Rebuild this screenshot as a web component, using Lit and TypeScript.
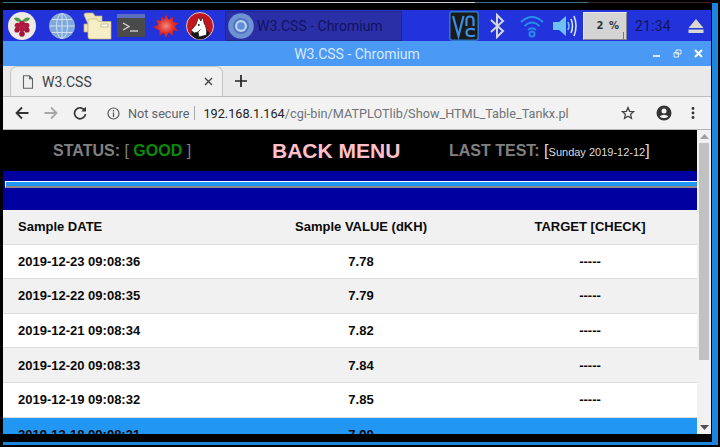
import { LitElement, css, html, svg } from "lit";
import { customElement } from "lit/decorators.js";

const rows = [
  ["2019-12-23 09:08:36", "7.78", "-----"],
  ["2019-12-22 09:08:35", "7.79", "-----"],
  ["2019-12-21 09:08:34", "7.82", "-----"],
  ["2019-12-20 09:08:33", "7.84", "-----"],
  ["2019-12-19 09:08:32", "7.85", "-----"],
  ["2019-12-18 09:08:31", "7.90", "-----"],
];

const icon = (w: number, h: number, body: unknown) => html`<svg
  width="${w}"
  height="${h}"
  viewBox="0 0 ${w} ${h}"
>${body}</svg>`;

const raspberry = svg`
  <circle cx="14" cy="14" r="14" fill="#eee9e4"/>
  <path d="M14 9 C11 5 8 5 6 6 C7 9 10 10 14 10 C18 10 21 9 22 6 C20 5 17 5 14 9Z" fill="#4b9a46"/>
  <circle cx="14" cy="12" r="3" fill="#b0183f"/><circle cx="9.5" cy="13.500" r="2.800" fill="#b0183f"/>
  <circle cx="18.500" cy="13.500" r="2.800" fill="#b0183f"/><circle cx="14" cy="17" r="3" fill="#b0183f"/>
  <circle cx="9" cy="18" r="2.600" fill="#a0163a"/><circle cx="19" cy="18" r="2.600" fill="#a0163a"/>
  <circle cx="14" cy="22" r="2.800" fill="#a0163a"/>`;

const globe = svg`
  <circle cx="13" cy="13" r="12.500" fill="#7fa9dc" stroke="#9fb4cc"/>
  <g fill="none" stroke="#cfe0f2" stroke-width="1">
    <ellipse cx="13" cy="13" rx="5.500" ry="12.500"/>
    <path d="M13 1V25M1 13H25M3 6.500H23M3 19.500H23"/>
  </g>`;

const folder = svg`
  <path d="M1 3 Q1 1 3 1H10L12 4H19V12H1V20H5V12Z" fill="#efe6b8" stroke="#b9ad7c" stroke-width=".7"/>
  <path d="M5 9 Q5 7 7 7H14L16 9.500H28V27H7 Q5 27 5 25Z" fill="#f6eec4" stroke="#c2b684" stroke-width=".7"/>
  <rect x="18" y="12" width="7" height="3" fill="#fff" stroke="#a59a6c" stroke-width=".6"/>`;

const terminal = svg`
  <rect width="28" height="23" y="1" fill="#4a4a4a"/>
  <rect width="28" height="4" y="1" fill="#5b6fc0"/>
  <path d="M6 10 L12 13.500 L6 17" fill="none" stroke="#d8d8d8" stroke-width="1.300"/>
  <path d="M13 18H21" stroke="#d8d8d8" stroke-width="1.300"/>`;

const burst = svg`
  <defs><radialGradient id="burst"><stop offset="0" stop-color="#f08a80"/><stop offset=".55" stop-color="#e2342c"/><stop offset="1" stop-color="#c81818"/></radialGradient></defs>
  <path d="M13 0 L15.500 6 L20 2.500 L20 8 L26 9 L21.500 12.500 L25.500 17 L20 16.500 L19.500 22 L15.500 18.500 L13 24 L10.500 18.500 L6.500 22 L6.500 16.500 L0 13 L5.500 11 L3 5.500 L8 7 L9 2 L11 6 Z" fill="url(#burst)"/>`;

const wolfram = svg`
  <circle cx="14" cy="14" r="13.500" fill="#c3161f" stroke="#cfcfcf"/>
  <path d="M5 22 Q9 27.500 14 27.500 Q20 27.500 24 21 L20 18 L8 18Z" fill="#161616"/>
  <path d="M12.500 5 L14.800 9 L17 5 L18 11 C20 14 21 18 20.500 23 L13 25 L12 20 L8.500 21 L5 18.500 L10 12.500Z" fill="#fff" stroke="#161616" stroke-width=".7"/>
  <path d="M12 20 L14.500 17.500" stroke="#161616" stroke-width=".8"/>
  <circle cx="12.800" cy="13" r=".9" fill="#161616"/>`;

const chromium = svg`
  <circle cx="13" cy="13" r="12.800" fill="#6f93d2"/>
  <circle cx="13" cy="13" r="8" fill="#4f74c4"/>
  <circle cx="13" cy="13" r="6" fill="#bcd2ee"/>
  <circle cx="13" cy="13" r="3.800" fill="#5f8fd8"/>`;

const vnc = svg`
  <rect x=".8" y=".8" width="28.400" height="28.400" rx="2.500" fill="#1a1a1a" stroke="#2f78c8" stroke-width="1.500"/>
  <g fill="none" stroke="#3a8ee4" stroke-width="2.200">
    <path d="M4 5 L9.500 25 L14.500 5"/>
    <path d="M17.500 15 V9 Q17.500 5.500 21 5.500 Q24.500 5.500 24.500 9 V15"/>
    <path d="M26 18.500 Q17.500 16.500 17.500 21.500 Q17.500 26.500 26 24.500"/>
  </g>`;

const bluetooth = svg`<path d="M2 7 L14 18 L8 24 V2 L14 8 L2 19" fill="none" stroke="#d6d6d6" stroke-width="2"/>`;

const wifi = svg`
  <g fill="none" stroke="#2a8be8" stroke-width="2">
    <path d="M1 8 Q12 -2 23 8"/><path d="M4.500 12 Q12 5 19.500 12"/><path d="M8 16 Q12 12.500 16 16"/>
  </g>
  <circle cx="12" cy="20" r="2.500" fill="none" stroke="#2a8be8" stroke-width="2"/>`;

const volume = svg`
  <path d="M0 8H6L13 2V22L6 16H0Z" fill="#6ec0f5"/>
  <g fill="none" stroke-width="1.600">
    <path d="M15 8 Q17 12 15 16" stroke="#6ec0f5"/>
    <path d="M18 5 Q21 12 18 19" stroke="#cfe4f5"/>
    <path d="M21 2 Q25 12 21 22" stroke="#cfe4f5"/>
  </g>`;

const eject = svg`
  <path d="M8 1 L15.500 10 H.5Z" fill="#d8d8cc"/>
  <rect x=".5" y="11.500" width="15" height="3.500" fill="#d8d8cc"/>`;

@customElement("app-root")
export class AppRoot extends LitElement {
  static styles = css`
    :host {
      display: flex;
      width: 720px;
      height: 447px;
      overflow: hidden;
      background: #000;
      font-family: Roboto, "Liberation Sans", sans-serif;
    }
    .main {
      width: 712px;
      height: 445px;
      flex: none;
      display: flex;
      flex-direction: column;
      box-sizing: border-box;
      padding: 2px 1px 0 3px;
    }
    .strip {
      width: 6px;
      height: 442px;
      margin-top: 3px;
      flex: none;
      background: #1d86dc;
    }
    .edge {
      height: 1px;
      flex: none;
      margin-bottom: 7px;
      background: linear-gradient(
        90deg,
        #3f6f86 0 237px,
        #c8d2d6 237px 472px,
        #3f6f86 472px 585px,
        #3a2020 585px
      );
    }
    .foot {
      height: 3px;
      flex: none;
      margin-top: 8px;
      margin-right: -1px;
      background: #1d86dc;
    }
    .panel {
      height: 31px;
      flex: none;
      background: #2233dc;
      display: flex;
      align-items: center;
    }
    .panel svg {
      flex: none;
      display: block;
    }
    .rasp { margin-left: 5px; }
    .globe { margin-left: 13px; }
    .folder { margin-left: 8px; }
    .term { margin-left: 5px; }
    .burst { margin-left: 8px; }
    .wolf { margin-left: 7px; }
    .vnc { margin-left: 47px; }
    .bt { margin-left: 10px; }
    .wifi { margin-left: 15px; }
    .vol { margin-left: 9px; }
    .eject { margin-left: 19px; }
    .task {
      width: 177px;
      height: 30px;
      flex: none;
      margin-left: 11px;
      background: #2a2fa8;
      border: 1px solid #22278c;
      box-sizing: border-box;
      display: flex;
      align-items: center;
      padding-left: 2px;
      color: #12135e;
      font-size: 14px;
      white-space: nowrap;
    }
    .task span {
      margin-left: 3px;
    }
    .meter {
      width: 44px;
      height: 28px;
      background: #d4d4d4;
      border: 1px solid;
      border-color: #e8e8e8 #888 #888 #e8e8e8;
      box-sizing: border-box;
      display: flex;
      align-items: center;
      justify-content: flex-end;
      padding-right: 7px;
      margin-left: 4px;
      font: bold 10px "DejaVu Sans", sans-serif;
      word-spacing: 2px;
      color: #333;
      flex: none;
      position: relative;
    }
    .meter::after {
      content: "";
      position: absolute;
      right: 2px;
      bottom: 0;
      width: 1px;
      height: 7px;
      background: #777;
    }
    .clock {
      margin-left: 8px;
      width: 34px;
      flex: none;
      color: #12135e;
      font-size: 14px;
      letter-spacing: 0.2px;
    }
    .title {
      height: 25px;
      flex: none;
      background: #4a9af5;
      display: flex;
      align-items: center;
      justify-content: center;
      color: #d8e8fb;
      font-size: 14px;
      position: relative;
    }
    .winbtns {
      position: absolute;
      right: 8px;
      top: 8px;
      display: flex;
      gap: 12px;
      align-items: center;
    }
    .tabs {
      height: 31px;
      flex: none;
      background: #e9e9e9;
      border-bottom: 1px solid #bcbcbc;
      box-sizing: border-box;
      display: flex;
      align-items: flex-end;
      padding-left: 7px;
    }
    .tab {
      width: 213px;
      height: 30px;
      box-sizing: border-box;
      background: #f0f0f0;
      border: 1px solid #c4c4c4;
      border-bottom: none;
      border-radius: 7px 7px 0 0;
      display: flex;
      align-items: center;
      padding: 0 9px 0 11px;
      color: #3c4043;
      font-size: 14px;
    }
    .tab span {
      margin-left: 8px;
      flex: 1;
    }
    .plus {
      margin-left: 12px;
      align-self: center;
      display: flex;
    }
    .toolbar {
      height: 33px;
      flex: none;
      background: #f2f2f2;
      border-bottom: 1px solid #b5b5b5;
      box-sizing: border-box;
      display: flex;
      align-items: center;
      padding-left: 12px;
      font-size: 12.7px;
      color: #5f6368;
    }
    .nav {
      display: flex;
      gap: 15px;
      align-items: center;
      flex: none;
    }
    .omni {
      flex: 1;
      display: flex;
      align-items: center;
      margin-left: 20px;
      white-space: nowrap;
    }
    .secure {
      margin-left: 8px;
    }
    .sep {
      width: 1px;
      height: 14px;
      background: #aaa;
      margin: 0 8px 0 5px;
    }
    .host {
      color: #222;
    }
    .url {
      color: #6f7378;
    }
    .tools {
      display: flex;
      align-items: center;
      gap: 19px;
      padding-right: 16px;
      flex: none;
    }
    .tools svg:first-child {
      margin-right: 2px;
    }
    .view {
      flex: 1;
      min-height: 0;
      display: flex;
      overflow: hidden;
    }
    .page {
      flex: 1;
      min-width: 0;
      display: flex;
      flex-direction: column;
      font-family: "Liberation Sans", Arial, sans-serif;
      background: #fff;
    }
    .head {
      height: 41px;
      flex: none;
      background: #000;
      display: grid;
      grid-template-columns: 219px 177px 1fr;
      align-items: center;
      color: #808080;
      font-size: 16px;
      font-weight: bold;
      padding-left: 50px;
      white-space: nowrap;
    }
    .good {
      color: #0a8a0a;
    }
    .thin {
      font-weight: normal;
    }
    .back {
      color: #ffc0cb;
      font-size: 21px;
      font-weight: bold;
    }
    .last small {
      color: #ddd;
      font-size: 11px;
      font-weight: normal;
    }
    .last i {
      color: #ddd;
      font-style: normal;
      font-weight: normal;
    }
    .band {
      height: 39px;
      flex: none;
      background: #0000a0;
      box-sizing: border-box;
      padding-top: 10px;
    }
    .bar {
      height: 7px;
      box-sizing: border-box;
      background: #2196f3;
      border-top: 1px solid #fff;
      border-left: 1px solid #fff;
      border-bottom: 2px solid #8a8a8a;
      margin-left: 2px;
    }
    .row {
      display: grid;
      grid-template-columns: 206px 274px 1fr;
      height: 34.600px;
      flex: none;
      box-sizing: border-box;
      border-bottom: 1px solid #ddd;
      align-items: center;
      padding: 0 15px;
      font-size: 13px;
      font-weight: bold;
      color: #0a0a0a;
      background: #fff;
    }
    .row.alt {
      background: #f1f1f1;
    }
    .row.sel {
      background: #2196f3;
      border-bottom: none;
    }
    .row div:nth-child(2),
    .row div:nth-child(3) {
      text-align: center;
    }
    .scroll {
      width: 14px;
      flex: none;
      background: #f1f1f1;
      display: flex;
      flex-direction: column;
      align-items: stretch;
    }
    .arrow {
      height: 13px;
      flex: none;
      display: flex;
      align-items: center;
      justify-content: center;
    }
    .track {
      flex: 1;
      min-height: 0;
      padding: 0 2px;
    }
    .thumb {
      height: 217px;
      background: #c1c1c1;
    }
  `;

  render() {
    return html`
      <div class="main">
        <div class="edge"></div>
        <div class="panel">
          <span class="rasp">${icon(28, 28, raspberry)}</span>
          <span class="globe">${icon(26, 26, globe)}</span>
          <span class="folder">${icon(29, 28, folder)}</span>
          <span class="term">${icon(28, 25, terminal)}</span>
          <span class="burst">${icon(26, 24, burst)}</span>
          <span class="wolf">${icon(28, 28, wolfram)}</span>
          <div class="task">
            ${icon(26, 26, chromium)}<span>W3.CSS - Chromium</span>
          </div>
          <span class="vnc">${icon(30, 30, vnc)}</span>
          <span class="bt">${icon(16, 26, bluetooth)}</span>
          <span class="wifi">${icon(24, 24, wifi)}</span>
          <span class="vol">${icon(26, 24, volume)}</span>
          <div class="meter">2 %</div>
          <div class="clock">21:34</div>
          <span class="eject">${icon(16, 16, eject)}</span>
        </div>
        <div class="title">
          W3.CSS - Chromium
          <div class="winbtns">
            ${icon(9, 9, svg`<rect y="6" x="1" width="7" height="2" fill="#dfeafb"/>`)}
            ${icon(9, 9, svg`<path d="M3 1H8V5H3ZM1 3.500H5.500V8H1Z" fill="none" stroke="#dfeafb"/>`)}
            ${icon(9, 9, svg`<path d="M1 1L8 8M8 1L1 8" stroke="#fff" stroke-width="2"/>`)}
          </div>
        </div>
        <div class="tabs">
          <div class="tab">
            ${icon(12, 14, svg`<path d="M1.500 .800H7.500L10.500 3.800V13.200H1.500ZM7.500 .800V3.800H10.500" fill="none" stroke="#5f6368" stroke-width="1.100"/>`)}
            <span>W3.CSS</span>
            ${icon(9, 9, svg`<path d="M1 1L8 8M8 1L1 8" stroke="#444" stroke-width="1.400"/>`)}
          </div>
          <div class="plus">
            ${icon(12, 12, svg`<path d="M6 0V12M0 6H12" stroke="#222" stroke-width="1.700"/>`)}
          </div>
        </div>
        <div class="toolbar">
          <div class="nav">
            ${icon(14, 14, svg`<path d="M13.500 7H2M7 1.500L1.500 7L7 12.500" fill="none" stroke="#333" stroke-width="1.800"/>`)}
            ${icon(14, 14, svg`<path d="M.5 7H12M7 1.500L12.500 7L7 12.500" fill="none" stroke="#a8a8a8" stroke-width="1.800"/>`)}
            ${icon(14, 14, svg`<path d="M11.800 4.500A5.500 5.500 0 1 0 12.500 8" fill="none" stroke="#333" stroke-width="1.700"/><path d="M13 .8V5.500H8.300Z" fill="#333"/>`)}
          </div>
          <div class="omni">
            ${icon(13, 13, svg`<circle cx="6.500" cy="6.500" r="5.500" fill="none" stroke="#555" stroke-width="1.200"/><path d="M6.500 5.500V10M6.500 3V4.500" stroke="#555" stroke-width="1.300"/>`)}
            <span class="secure">Not secure</span>
            <div class="sep"></div>
            <span class="host">192.168.1.164</span><span class="url">/cgi-bin/MATPLOTlib/Show_HTML_Table_Tankx.pl</span>
          </div>
          <div class="tools">
            ${icon(14, 14, svg`<path d="M7 1.500L8.600 5.300L12.700 5.600L9.600 8.300L10.500 12.300L7 10.200L3.500 12.300L4.400 8.300L1.300 5.600L5.400 5.300Z" fill="none" stroke="#444" stroke-width="1.300"/>`)}
            ${icon(16, 16, svg`<circle cx="8" cy="8" r="7.500" fill="#333"/><circle cx="8" cy="6" r="2.500" fill="#f2f2f2"/><path d="M3.500 11.500Q8 8 12.500 11.500Q8 15 3.500 11.500Z" fill="#f2f2f2"/>`)}
            ${icon(4, 14, svg`<circle cx="2" cy="2.500" r="1.400" fill="#333"/><circle cx="2" cy="7" r="1.400" fill="#333"/><circle cx="2" cy="11.500" r="1.400" fill="#333"/>`)}
          </div>
        </div>
        <div class="view">
          <div class="page">
            <div class="head">
              <div>STATUS: <span class="thin">[</span> <span class="good">GOOD</span> <span class="thin">]</span></div>
              <div class="back">BACK MENU</div>
              <div class="last">LAST TEST: <i>[</i><small>Sunday 2019-12-12</small><i>]</i></div>
            </div>
            <div class="band"><div class="bar"></div></div>
            <div class="row alt">
              <div>Sample DATE</div>
              <div>Sample VALUE (dKH)</div>
              <div>TARGET [CHECK]</div>
            </div>
            ${rows.map(
              (r, i) => html`
                <div class="row ${i === 5 ? "sel" : i % 2 === 1 ? "alt" : ""}">
                  <div>${r[0]}</div>
                  <div>${r[1]}</div>
                  <div>${r[2]}</div>
                </div>
              `
            )}
          </div>
          <div class="scroll">
            <div class="arrow">
              ${icon(9, 5, svg`<path d="M4.500 0L9 5H0Z" fill="#a0a0a0"/>`)}
            </div>
            <div class="track"><div class="thumb"></div></div>
            <div class="arrow">
              ${icon(9, 5, svg`<path d="M0 0H9L4.500 5Z" fill="#505050"/>`)}
            </div>
          </div>
        </div>
        <div class="foot"></div>
      </div>
      <div class="strip"></div>
    `;
  }
}

declare global {
  interface HTMLElementTagNameMap {
    "app-root": AppRoot;
  }
}
